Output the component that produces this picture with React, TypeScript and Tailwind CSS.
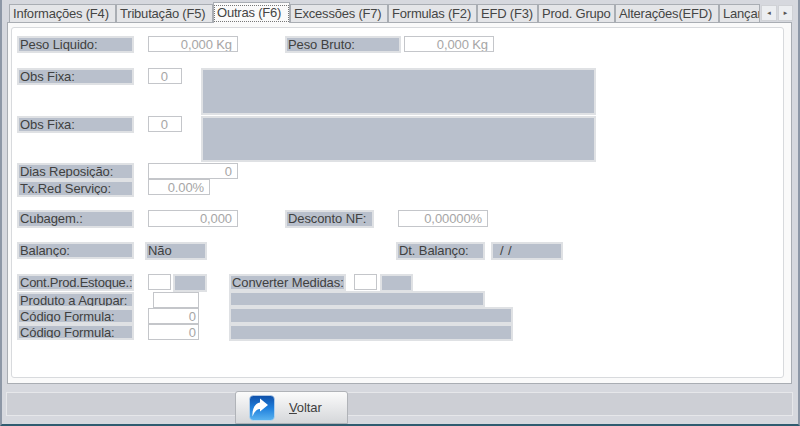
import type { ReactNode } from "react";

const tabs = [
  { label: "Informações (F4)", width: "w-[107px]" },
  { label: "Tributação (F5)", width: "w-[97px]" },
  { label: "Outras (F6)", width: "w-[77px]", active: true },
  { label: "Excessões (F7)", width: "w-[98px]" },
  { label: "Formulas (F2)", width: "w-[89px]" },
  { label: "EFD (F3)", width: "w-[61px]" },
  { label: "Prod. Grupo", width: "w-[77px]" },
  { label: "Alterações(EFD)", width: "w-[104px]" },
  { label: "Lançar", width: "w-[41px]" },
];

const Tab = ({ label, width, active }: { label: string; width: string; active?: boolean }) => (
  <div
    className={`${width} shrink-0 overflow-hidden whitespace-nowrap border border-[#a9adb3] tracking-[-0.2px] ${
      active
        ? "-mt-[2px] h-[21px] border-b-0 bg-[#fafafa] pt-[2px] leading-[17px]"
        : "h-[19px] bg-[#e4e5e8] pl-[3px] leading-[17px]"
    }`}
  >
    {active ? <span className="block h-[17px] border border-dotted border-[#777] pl-[2px] leading-[13px]">{label}</span> : label}
  </div>
);

// cinza dos campos somente leitura
const Label = ({ children, width, ml, h }: { children?: ReactNode; width: string; ml?: string; h?: string }) => (
  <div
    className={`${width} ${ml ?? ""} ${h ?? "h-[17px]"} shrink-0 overflow-hidden whitespace-nowrap border-2 border-[#dfe1e4] bg-[#b9c0cc] pl-[1px] leading-[14px] text-[#404040]`}
  >
    {children}
  </div>
);

const Input = ({ children, width, ml, h }: { children?: ReactNode; width: string; ml?: string; h?: string }) => (
  <div
    className={`${width} ${ml ?? ""} ${h ?? "h-[16px]"} shrink-0 overflow-hidden whitespace-nowrap border border-[#c4c6ca] bg-white pr-[5px] text-right leading-[15px] text-[#a6a6a6]`}
  >
    {children}
  </div>
);

export default function App() {
  return (
    <div className="relative flex h-[426px] w-[800px] flex-col overflow-hidden border-x-2 border-b-2 border-x-[#8d97a6] border-b-[#2f5c70] bg-[#d6d8de] font-['Liberation_Sans',sans-serif] text-[13px] tracking-[-0.1px] text-[#454545]">
      <div className="relative z-10 mt-[4px] ml-[7px] flex h-[18px] items-start">
        {tabs.map((t) => (
          <Tab key={t.label} {...t} />
        ))}
        <div className="mt-[1px] ml-[1px] flex h-[16px] gap-[1px]">
          <div className="flex w-[16px] items-center justify-center border border-[#d0d2d6] bg-[#eceef1] text-[6px] text-[#555]">◄</div>
          <div className="flex w-[15px] items-center justify-center border border-[#d0d2d6] bg-[#eceef1] text-[6px] text-[#555]">►</div>
        </div>
      </div>

      <div className="ml-[5px] h-[362px] w-[785px] border border-[#a9adb3] bg-[#fafafa] pt-[4px] pr-[7px] pl-[3px]">
        <div className="h-[351px] rounded-[3px] border border-[#d8dadd] bg-white pt-[8px] pl-[5px]">
          <div className="flex items-start">
            <Label width="w-[117px]">Peso Liquido:</Label>
            <Input width="w-[90px]" ml="ml-[14px]">0,000 Kg</Input>
            <Label width="w-[116px]" ml="ml-[47px]">Peso Bruto:</Label>
            <Input width="w-[90px]" ml="ml-[3px]">0,000 Kg</Input>
          </div>

          <div className="mt-[15px] flex items-start">
            <Label width="w-[117px]">Obs Fixa:</Label>
            <Input width="w-[34px]" ml="ml-[14px]">
              <span className="mr-[8px]">0</span>
            </Input>
            <Label width="w-[395px]" ml="ml-[19px]" h="h-[47px]" />
          </div>
          <div className="mt-[1px] flex items-start">
            <Label width="w-[117px]">Obs Fixa:</Label>
            <Input width="w-[34px]" ml="ml-[14px]">
              <span className="mr-[8px]">0</span>
            </Input>
            <Label width="w-[395px]" ml="ml-[19px]" h="h-[46px]" />
          </div>

          <div className="mt-[1px] flex items-start">
            <Label width="w-[117px]">Dias Reposição:</Label>
            <Input width="w-[90px]" ml="ml-[14px]">0</Input>
          </div>
          <div className="flex items-start">
            <Label width="w-[117px]">Tx.Red Serviço:</Label>
            <Input width="w-[62px]" ml="ml-[14px]" h="h-[16px] -mt-[1px]">0.00%</Input>
          </div>

          <div className="mt-[13px] flex items-start">
            <Label width="w-[117px]" h="h-[18px]">Cubagem.:</Label>
            <Input width="w-[90px]" ml="ml-[14px]" h="h-[17px]">0,000</Input>
            <Label width="w-[89px]" ml="ml-[47px]" h="h-[18px]">Desconto NF:</Label>
            <Input width="w-[90px]" ml="ml-[24px]" h="h-[17px]">0,00000%</Input>
          </div>

          <div className="mt-[14px] flex items-start">
            <Label width="w-[117px]">Balanço:</Label>
            <Label width="w-[62px]" ml="ml-[11px]" h="h-[18px]">Não</Label>
            <Label width="w-[89px]" ml="ml-[189px]" h="h-[18px]">Dt. Balanço:</Label>
            <Label width="w-[72px]" ml="ml-[6px]" h="h-[18px]">
              <span className="ml-[6px] [word-spacing:1px]">/ /</span>
            </Label>
          </div>

          <div className="mt-[14px] flex items-start">
            <Label width="w-[117px]">
              <span className="tracking-[-0.25px]">Cont.Prod.Estoque.:</span>
            </Label>
            <Input width="w-[23px]" ml="ml-[14px]" />
            <Label width="w-[34px]" ml="ml-[2px]" h="h-[18px]" />
            <Label width="w-[117px]" ml="ml-[22px]">Converter Medidas:</Label>
            <Input width="w-[23px]" ml="ml-[8px]" />
            <Label width="w-[33px]" ml="ml-[3px]" h="h-[18px]" />
          </div>
          <div className="flex items-start">
            <Label width="w-[117px]" h="h-[16px]">Produto a Agrupar:</Label>
            <Input width="w-[46px]" ml="ml-[19px]" />
            <Label width="w-[256px]" ml="ml-[30px]" h="h-[16px] -mt-[1px]" />
          </div>
          <div className="flex items-start">
            <Label width="w-[117px]" h="h-[16px]">Código Formula:</Label>
            <Input width="w-[51px]" ml="ml-[14px]">
              <span className="-mr-[3px]">0</span>
            </Input>
            <Label width="w-[284px]" ml="ml-[30px]" h="h-[17px] -mt-[1px]" />
          </div>
          <div className="flex items-start">
            <Label width="w-[117px]" h="h-[16px]">Código Formula:</Label>
            <Input width="w-[51px]" ml="ml-[14px]">
              <span className="-mr-[3px]">0</span>
            </Input>
            <Label width="w-[284px]" ml="ml-[30px]" h="h-[17px]" />
          </div>
        </div>
      </div>

      <div className="mt-[8px] ml-[4px] h-[24px] w-[787px] border border-[#e6e7ea] bg-[#cdcfd5]" />

      {/* botão passa por cima da barra inferior */}
      <button className="absolute top-[391px] left-[233px] flex h-[33px] w-[113px] items-center rounded-t-[3px] border border-[#b0b3b8] bg-gradient-to-b from-[#fbfbfb] to-[#d5d7da] pl-[13px] text-[#404040]">
        <svg viewBox="0 0 26 26" className="h-[26px] w-[26px]">
          <defs>
            <linearGradient id="voltar" x1="0" y1="0" x2="0" y2="1">
              <stop offset="0" stopColor="#0f4fa8" />
              <stop offset="0.5" stopColor="#1f7fdc" />
              <stop offset="1" stopColor="#5bb4f0" />
            </linearGradient>
          </defs>
          <rect x="0.5" y="0.5" width="25" height="25" rx="4" fill="url(#voltar)" stroke="#cfe0f2" strokeWidth="0.6" />
          <path d="M19 10 L11 3.5 V7.5 C6 8.5 3 13.5 3.5 21.5 C5.5 16.5 8 14 11 14 V16.5 Z" fill="#fff" />
        </svg>
        <span className="ml-[14px]">
          <span className="underline">V</span>oltar
        </span>
      </button>
    </div>
  );
}
